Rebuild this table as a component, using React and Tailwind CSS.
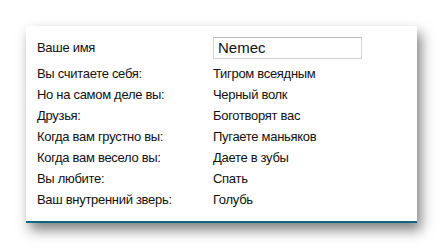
const rows = [
  ["Вы считаете себя:", "Тигром всеядным"],
  ["Но на самом деле вы:", "Черный волк"],
  ["Друзья:", "Боготворят вас"],
  ["Когда вам грустно вы:", "Пугаете маньяков"],
  ["Когда вам весело вы:", "Даете в зубы"],
  ["Вы любите:", "Спать"],
  ["Ваш внутренний зверь:", "Голубь"],
];

export default function App() {
  return (
    <div className="w-[443px] h-[249px] bg-white pl-[26px] pt-[26px] font-['Liberation_Sans',Arial,sans-serif] text-[13px] tracking-[-0.3px] text-[#111]">
      <div className="w-[391px] bg-white border-b-2 border-[#0e6680] shadow-[4px_7px_12px_rgba(0,0,0,0.5)] pl-[11px] pt-[11px] pb-[11px]">
        <div className="flex items-center h-[22px] mb-[4px]">
          <span className="w-[176px]">Ваше имя</span>
          <input
            defaultValue="Nemec"
            className="w-[149px] h-[22px] border border-[#d4d4d8] border-t-[#b8b8c0] px-[4px] text-[15px] tracking-normal text-[#111] outline-none"
          />
        </div>
        {rows.map(([label, value]) => (
          <div key={label} className="flex h-[21px] items-center leading-[21px]">
            <span className="w-[176px]">{label}</span>
            <span>{value}</span>
          </div>
        ))}
      </div>
    </div>
  );
}
